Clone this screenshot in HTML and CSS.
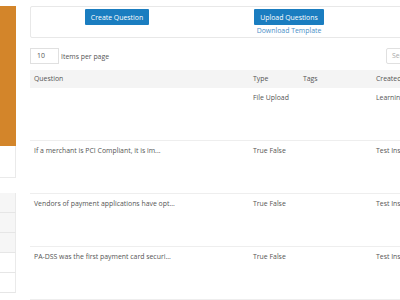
FILE: index.html
```html
<!DOCTYPE html>
<html>
<head>
<meta charset="utf-8">
<link rel="stylesheet" href="styles.css">
</head>
<body>
<div class="page">
  <aside class="sidebar">
    <div class="brand"></div>
    <div class="side-box"></div>
    <ul class="side-list">
      <li class="gray"></li>
      <li class="gray"></li>
      <li class="gray"></li>
      <li></li>
      <li></li>
    </ul>
  </aside>
  <main class="main">
    <div class="actions">
      <div class="action">
        <button class="btn">Create Question</button>
      </div>
      <div class="action">
        <button class="btn">Upload Questions</button>
        <a class="link">Download Template</a>
      </div>
      <div class="action"></div>
    </div>
    <div class="toolbar">
      <div class="per-page">
        <span class="num-input">10</span>
        <span class="label">Items per page</span>
      </div>
      <span class="search">Search</span>
    </div>
    <div class="table">
      <div class="row head">
        <div class="c-q">Question</div>
        <div class="c-t">Type</div>
        <div class="c-g">Tags</div>
        <div class="c-c">Created By</div>
      </div>
      <div class="row">
        <div class="c-q"></div>
        <div class="c-t">File Upload</div>
        <div class="c-g"></div>
        <div class="c-c">Learning Admin</div>
      </div>
      <div class="row">
        <div class="c-q">If a merchant is PCI Compliant, it is im...</div>
        <div class="c-t">True False</div>
        <div class="c-g"></div>
        <div class="c-c">Test Instructor</div>
      </div>
      <div class="row">
        <div class="c-q">Vendors of payment applications have opt...</div>
        <div class="c-t">True False</div>
        <div class="c-g"></div>
        <div class="c-c">Test Instructor</div>
      </div>
      <div class="row">
        <div class="c-q">PA-DSS was the first payment card securi...</div>
        <div class="c-t">True False</div>
        <div class="c-g"></div>
        <div class="c-c">Test Instructor</div>
      </div>
    </div>
  </main>
</div>
</body>
</html>
```
FILE: styles.css
```css
html, body {
  margin: 0;
  padding: 0;
  background: #fff;
  overflow: hidden;
}
body {
  width: 400px;
  height: 300px;
  font-family: "Open Sans", "Noto Sans", sans-serif;
  font-size: 6.9px;
  color: #555;
}
.page {
  display: flex;
  gap: 14px;
  padding-top: 6px;
  width: 800px;
}
.sidebar {
  width: 16px;
  flex: none;
  display: flex;
  flex-direction: column;
}
.brand {
  height: 140px;
  background: #d3852a;
}
.side-box {
  height: 31px;
  border-right: 1px solid #eaeaea;
  border-bottom: 1px solid #eaeaea;
}
.side-list {
  list-style: none;
  margin: 15px 0 0;
  padding: 0;
}
.side-list li {
  height: 19px;
  border-right: 1px solid #eaeaea;
  border-bottom: 1px solid #e6e6e6;
  background: #fff;
}
.side-list li.gray {
  background: #f6f6f6;
}
.main {
  flex: none;
  width: 560px;
}
.actions {
  display: grid;
  grid-template-columns: 172px 172px 172px;
  width: 516px;
  border: 1px solid #e8e8e8;
  border-radius: 2px;
  box-sizing: border-box;
  height: 32px;
}
.action {
  display: flex;
  flex-direction: column;
  align-items: center;
  padding-top: 2px;
}
.btn {
  font-family: inherit;
  font-size: 6.9px;
  color: #fff;
  background: #1a7dc0;
  border: none;
  border-radius: 1px;
  height: 16px;
  padding: 0 6px;
  margin: 0;
}
.link {
  color: #4a8ec7;
  font-size: 6.9px;
  margin-top: 1px;
  line-height: 9px;
}
.toolbar {
  display: flex;
  justify-content: space-between;
  align-items: center;
  width: 370px;
  margin-top: 10px;
  height: 16px;
}
.per-page {
  display: flex;
  align-items: center;
  gap: 2px;
}
.num-input {
  width: 29px;
  height: 16px;
  box-sizing: border-box;
  border: 1px solid #e0e0e0;
  padding-left: 6px;
  line-height: 14px;
  color: #555;
}
.label {
  color: #555;
}
.search {
  width: 40px;
  height: 16px;
  box-sizing: border-box;
  border: 1px solid #e0e0e0;
  border-radius: 2px;
  padding-left: 5px;
  line-height: 14px;
  color: #aaa;
  margin-right: -26px;
}
.table {
  margin-top: 6px;
  width: 420px;
}
.row {
  display: grid;
  grid-template-columns: 219px 50px 73px 1fr;
  height: 53px;
  border-bottom: 1px solid #eeeeee;
  box-sizing: border-box;
  padding-top: 5px;
  line-height: 10px;
  white-space: nowrap;
}
.row > div {
  padding-left: 4px;
}
.row.head {
  height: 18px;
  background: #f4f4f4;
  border-bottom: none;
  padding-top: 4px;
  color: #555;
}
```
